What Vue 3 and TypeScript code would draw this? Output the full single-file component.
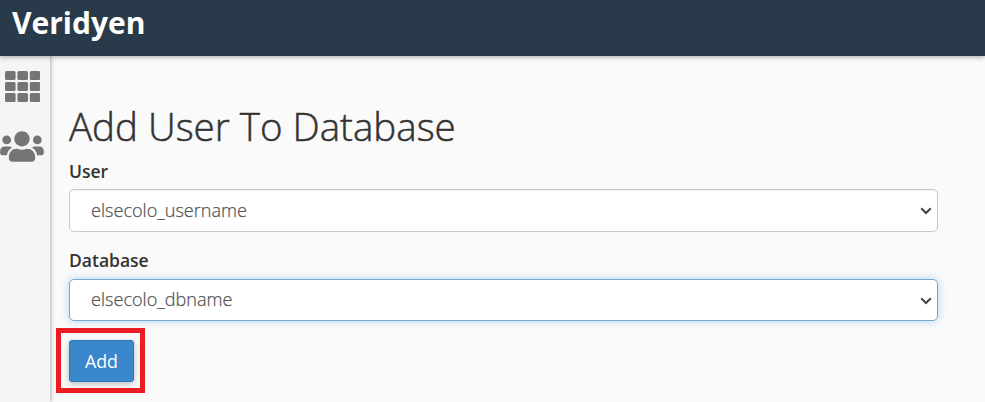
<script setup lang="ts">
import { ref } from 'vue'

interface Field {
  id: string
  label: string
  options: string[]
  active: boolean
}

const fields: Field[] = [
  { id: 'user', label: 'User', options: ['elsecolo_username'], active: false },
  { id: 'database', label: 'Database', options: ['elsecolo_dbname'], active: true },
]
const selected = ref<string[]>(fields.map((f) => f.options[0]))
const cells = [0, 1, 2]
</script>

<template>
  <div class="page">
    <header class="topbar"><span class="brand">Veridyen</span></header>
    <div class="body">
      <nav class="sidebar">
        <svg class="grid-icon" viewBox="0 0 35 31">
          <template v-for="r in cells" :key="r">
            <rect v-for="c in cells" :key="c" :x="c * 12.4" :y="r * 11" width="10.6" height="9" rx="1.6" />
          </template>
        </svg>
        <svg class="users-icon" viewBox="0 0 640 512">
          <path d="M96 224c35.300 0 64-28.700 64-64s-28.700-64-64-64-64 28.700-64 64 28.700 64 64 64zm448 0c35.300 0 64-28.700 64-64s-28.700-64-64-64-64 28.700-64 64 28.700 64 64 64zm32 32h-64c-17.600 0-33.500 7.100-45.100 18.600 40.300 22.100 68.900 62 75.100 109.400h66c17.700 0 32-14.300 32-32v-32c0-35.300-28.700-64-64-64zm-256 0c61.900 0 112-50.100 112-112S381.900 32 320 32 208 82.100 208 144s50.100 112 112 112zm76.800 32h-8.300c-20.800 10-43.900 16-68.500 16s-47.600-6-68.500-16h-8.300C179.600 288 128 339.600 128 403.200V432c0 26.500 21.500 48 48 48h288c26.500 0 48-21.500 48-48v-28.800c0-63.600-51.600-115.200-115.200-115.200zm-223.700-13.400C161.500 263.100 145.600 256 128 256H64c-35.300 0-64 28.700-64 64v32c0 17.700 14.300 32 32 32h65.900c6.300-47.400 34.900-87.300 75.200-109.400z" />
        </svg>
      </nav>
      <main class="content">
        <h2 class="title">Add User To Database</h2>
        <form @submit.prevent>
          <div v-for="(field, i) in fields" :key="field.id" class="field">
            <label :for="field.id">{{ field.label }}</label>
            <div class="select-wrap">
              <select :id="field.id" v-model="selected[i]" :class="{ active: field.active }">
                <option v-for="o in field.options" :key="o" :value="o">{{ o }}</option>
              </select>
              <svg class="chevron" viewBox="0 0 12 8"><path d="M1.200 1.300 6 6 10.800 1.300" /></svg>
            </div>
          </div>
          <div class="action">
            <button type="submit">Add</button>
          </div>
        </form>
      </main>
    </div>
  </div>
</template>

<style>
body {
  margin: 0;
  overflow: hidden;
}
</style>

<style scoped>
.page {
  display: flex;
  flex-direction: column;
  height: 402px;
  background: #fafafa;
  color: #333;
  font-family: 'Open Sans', 'Noto Sans', sans-serif;
}
.topbar {
  position: relative;
  z-index: 1;
  flex: none;
  box-sizing: border-box;
  height: 56px;
  padding-left: 12px;
  background: #293a4a;
  box-shadow: 0 1px 5px rgba(0, 0, 0, 0.35);
}
.brand {
  display: block;
  color: #fff;
  font-size: 30px;
  font-weight: 700;
  line-height: 45px;
}
.body {
  display: flex;
  flex: 1;
  min-height: 0;
}
.sidebar {
  display: flex;
  flex: none;
  flex-direction: column;
  width: 50px;
  background: #f5f5f5;
  box-shadow: 1px 0 4px rgba(0, 0, 0, 0.3);
  fill: #757575;
}
.grid-icon {
  width: 35px;
  height: 31px;
  margin: 15px 0 0 5px;
}
.users-icon {
  width: 44px;
  height: 35px;
  margin-top: 27px;
}
.content {
  width: 869px;
  padding: 43px 0 0 19px;
}
.title {
  margin: 0 0 1px;
  font-size: 38.5px;
  font-weight: 300;
  line-height: 54px;
  -webkit-text-stroke: 0.5px #333;
}
.field {
  height: 89px;
}
.field label {
  display: block;
  height: 35px;
  font-size: 17.5px;
  font-weight: 600;
  line-height: 35px;
}
.select-wrap {
  display: flex;
  align-items: center;
  height: 43px;
}
select {
  appearance: none;
  box-sizing: border-box;
  width: 869px;
  height: 43px;
  padding: 0 40px 2px 21px;
  border: 1px solid #c8c8c8;
  border-radius: 5px;
  outline: none;
  background: #fff;
  color: #555;
  font: 300 18.1px 'Open Sans', 'Noto Sans', sans-serif;
  -webkit-text-stroke: 0.25px #555;
  box-shadow: inset 0 1px 1px rgba(0, 0, 0, 0.05);
}
select.active {
  height: 42px;
  margin-top: 1px;
  padding-bottom: 3px;
  border-color: #72a9d2;
  box-shadow: 0 0 9px rgba(102, 175, 233, 0.5);
}
.chevron {
  flex: none;
  width: 12px;
  height: 8px;
  margin-left: -18px;
  fill: none;
  stroke: #444;
  stroke-width: 2;
  pointer-events: none;
}
.active + .chevron {
  margin-top: 2px;
}
.action {
  box-sizing: border-box;
  width: 89px;
  height: 65px;
  margin: -4px 0 0 -13px;
  padding: 7px 8px;
  border: 5px solid #ed1c24;
}
button {
  display: block;
  width: 65px;
  height: 42px;
  padding: 0;
  border: 1px solid #2c78b8;
  border-radius: 3px;
  background: #3a87cb;
  color: #fff;
  font: 400 17.8px 'Open Sans', 'Noto Sans', sans-serif;
  box-shadow: 0 2px 6px rgba(0, 0, 0, 0.25);
}
</style>
